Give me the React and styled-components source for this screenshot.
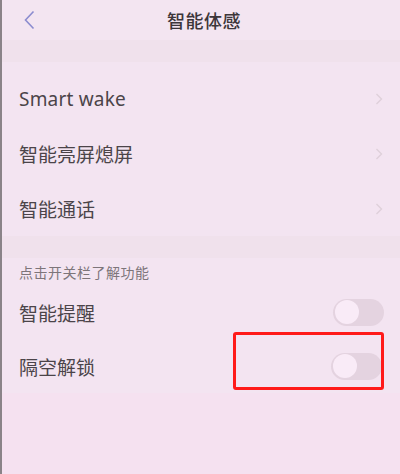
import React from "react";
import styled, { createGlobalStyle } from "styled-components";

// styles
const GlobalStyle = createGlobalStyle`
  html, body {
    margin: 0;
    padding: 0;
    background: #f3e4f1;
  }
  body {
    font-family: "Noto Sans CJK SC", "Noto Sans", sans-serif;
    color: #4b4449;
  }
`;

const Screen = styled.div`
  width: 400px;
  height: 474px;
  display: flex;
  flex-direction: column;
  background: #f3e4f1;
  border-left: 2px solid #8a8388;
  box-sizing: border-box;
  overflow: hidden;
`;

const TopBar = styled.header`
  height: 40px;
  display: grid;
  grid-template-columns: 60px 1fr 60px;
  align-items: center;
  background: #f3e5f1;
`;

const Back = styled.div`
  display: flex;
  align-items: center;
  padding-left: 20px;
  height: 100%;
`;

const Title = styled.h1`
  margin: 0;
  text-align: center;
  font-size: 18px;
  font-weight: 500;
  color: #3c363a;
  letter-spacing: 0.5px;
  padding-left: 6px;
`;

const Band = styled.div`
  height: ${(p) => p.h}px;
  background: #f0e1ec;
`;

const Group = styled.section`
  display: flex;
  flex-direction: column;
  padding-top: ${(p) => p.top || 0}px;
  background: #f3e4f1;
`;

const Row = styled.div`
  position: relative;
  height: ${(p) => p.h || 55}px;
  display: flex;
  align-items: center;
  justify-content: space-between;
  padding: 0 16px 0 17px;
`;

const Label = styled.span`
  font-size: 19px;
  font-family: ${(p) =>
    p.latin ? '"Noto Sans", "Noto Sans CJK SC", sans-serif' : "inherit"};
  color: #4b4449;
  letter-spacing: ${(p) => (p.latin ? "0.2px" : "0")};
`;

const Caption = styled.div`
  height: 27px;
  display: flex;
  align-items: center;
  padding-left: 17px;
  font-size: 14px;
  color: #7d757a;
  letter-spacing: 0.5px;
`;

const Toggle = styled.div`
  width: 51px;
  height: 27px;
  border-radius: 14px;
  background: #e4d3e0;
  display: flex;
  align-items: center;
  padding: 0 2px;
  box-sizing: border-box;
  margin-right: ${(p) => p.shift || 0}px;
  &::before {
    content: "";
    width: 24px;
    height: 24px;
    border-radius: 50%;
    background: #f9ebf7;
  }
`;

const Highlight = styled.div`
  position: absolute;
  left: 231px;
  top: -7px;
  width: 151px;
  height: 58px;
  border: 3px solid #ff1a1a;
  border-radius: 3px;
  box-sizing: border-box;
  pointer-events: none;
`;

const Rest = styled.div`
  flex: 1;
  background: #f5e1f0;
`;

function Chevron() {
  return (
    <svg width="8" height="12" viewBox="0 0 8 12" style={{ marginRight: 1 }}>
      <path d="M1.5 1 L6.5 6 L1.5 11" fill="none" stroke="#ded0da" strokeWidth="1.4" />
    </svg>
  );
}

function BackIcon() {
  return (
    <svg width="14" height="20" viewBox="0 0 14 20">
      <path d="M11.5 1.5 L3.5 10 L11.5 18.5" fill="none" stroke="#8b8ccf" strokeWidth="1.6" />
    </svg>
  );
}

export default function App() {
  return (
    <>
      <GlobalStyle />
      <Screen>
        <TopBar>
          <Back>
            <BackIcon />
          </Back>
          <Title>智能体感</Title>
          <div />
        </TopBar>
        <Band h={22} />
        <Group top={9}>
          <Row>
            <Label latin>Smart wake</Label>
            <Chevron />
          </Row>
          <Row>
            <Label>智能亮屏熄屏</Label>
            <Chevron />
          </Row>
          <Row>
            <Label>智能通话</Label>
            <Chevron />
          </Row>
        </Group>
        <Band h={22} />
        <Group>
          <Caption>点击开关栏了解功能</Caption>
          <Row h={54}>
            <Label>智能提醒</Label>
            <Toggle />
          </Row>
          <Row h={54}>
            <Label>隔空解锁</Label>
            <Toggle shift={2} />
            <Highlight />
          </Row>
        </Group>
        <Rest />
      </Screen>
    </>
  );
}
